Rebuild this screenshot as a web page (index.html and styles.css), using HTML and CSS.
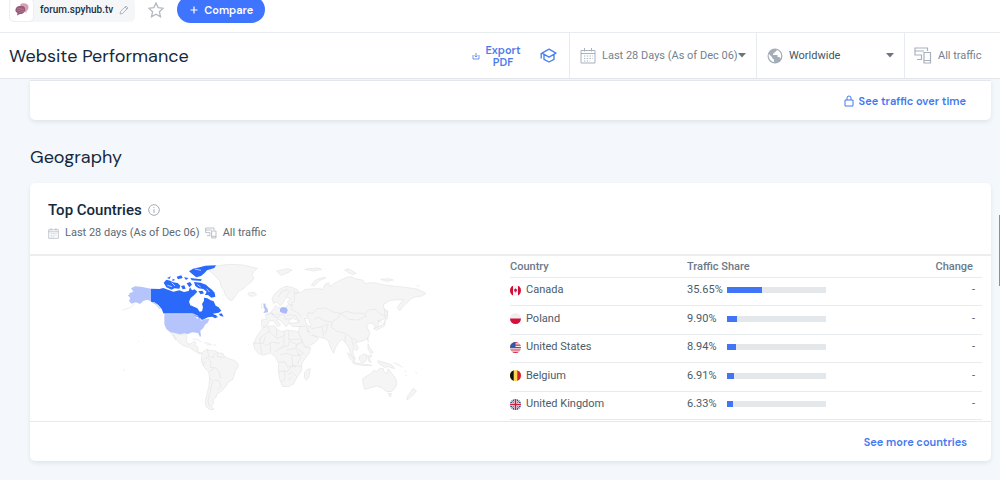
FILE: index.html
```html
<!DOCTYPE html>
<html lang="en">
<head>
<meta charset="utf-8">
<meta name="viewport" content="width=device-width, initial-scale=1">
<title>Website Performance</title>
<link rel="stylesheet" href="styles.css">
</head>
<body>
<svg class="defs" aria-hidden="true">
  <symbol id="calendar" viewBox="0 0 16 16"><path d="M1 2.500h14v12.500H1zM1 5.500h14M4.500 0v3.500M11.500 0v3.500" fill="none" stroke="currentColor"/><path d="M4 8h9M4 10.500h9M4 13h6" fill="none" stroke="currentColor" stroke-width="1.200" stroke-dasharray="1.300 1.500"/></symbol>
  <symbol id="devices" viewBox="0 0 18 17"><path d="M13.500 4V1H1v7h6.500v4.500H3M1 4h9M10 5.500h6.500v10.500H10zM10 13.500h6.500" fill="none" stroke="currentColor" stroke-width="1.200"/></symbol>
  <symbol id="caret" viewBox="0 0 8 5"><path d="M0 0h8L4 4.500z" fill="currentColor"/></symbol>
</svg>
<header class="topbar">
  <div class="site">
    <span class="site-icon"><svg width="14" height="13" viewBox="0 0 14 13"><path d="M5 1.500C8-1 14 0 13.500 4.500c0 2-1 3-2 3.500v2L9 8z" fill="#d3a3b2"/><path d="M1 5C3 2 9 2 10 5c1 4-2 6-5 6l-3 1.500.500-2.500C0 9 0 7 1 5z" fill="#95597a"/><path d="M2 6l5-1M2 8l7-2M4 9.500l5-1.500" stroke="#b97c91" stroke-width=".8"/></svg></span>
    <span class="site-name">forum.spyhub.tv</span>
    <button class="icon-button" aria-label="Edit website"><svg width="10" height="10" viewBox="0 0 10 10"><path d="M1 9l.6-2.600L7 1l2 2-5.400 5.400zM6 2l2 2" fill="none" stroke="#a9b0b8" stroke-width=".9"/></svg></button>
  </div>
  <button class="icon-button star" aria-label="Add to favorites"><svg width="16" height="16" viewBox="0 0 16 16"><path d="M8 .9l2.100 4.700 5.100.6-3.800 3.500 1.100 5.100L8 12.200l-4.500 2.600 1.100-5.100L.8 6.200l5.100-.6z" fill="none" stroke="#b2bac2" stroke-width="1.300"/></svg></button>
  <button class="compare"><svg width="8" height="8" viewBox="0 0 8 8"><path d="M4 .5v7M.5 4h7" stroke="#fff" stroke-width="1.200"/></svg>Compare</button>
</header>
<div class="toolbar">
  <h1>Website Performance</h1>
  <button class="export"><svg width="8" height="8" viewBox="0 0 8 8"><path d="M1 3v4h6V3M4 1v4M2.500 3.500L4 5l1.500-1.500" fill="none" stroke="currentColor" stroke-width=".8"/></svg><span>Export PDF</span></button>
  <button class="icon-button academy" aria-label="Academy"><svg width="18" height="15" viewBox="0 0 18 15"><path d="M9 1.200l7 4-7 4-7-4zM4 6.800v4.500l5 2.700 5-2.700V6.800M1.200 5v5.500" fill="none" stroke="#4b84f0" stroke-width="1.400" stroke-linejoin="round"/></svg></button>
  <div class="filter date"><svg class="filter-icon" width="16" height="16"><use href="#calendar"/></svg><select aria-label="Date range"><option>Last 28 Days (As of Dec 06)</option></select><svg class="caret" width="8" height="5"><use href="#caret"/></svg></div>
  <div class="filter country"><svg class="filter-icon" width="16" height="16" viewBox="0 0 16 16"><circle cx="8" cy="8" r="7.500" fill="#a4adb8"/><path d="M1.800 6l3.200 3v1l2 1.500v2.500C3.500 13.500 1 10 1.800 6zM9.500 1.700c.5 1.500-.5 1.800-2 2.300v1.500H6V7h4.500v2H12c1 0 1.300 1 1.300 2 1.700-2.500 1.300-7.500-3.800-9.300z" fill="#fff"/></svg><select aria-label="Country"><option>Worldwide</option></select><svg class="caret" width="8" height="5"><use href="#caret"/></svg></div>
  <div class="filter traffic"><svg class="filter-icon" width="18" height="17"><use href="#devices"/></svg><span>All traffic</span></div>
</div>
<main>
  <section class="card previous">
    <a class="more" href="#traffic"><svg width="10" height="12" viewBox="0 0 10 12"><path d="M1 5h8v6H1zM3 5V3a2 2 0 0 1 4 0v2" fill="none" stroke="currentColor"/></svg>See traffic over time</a>
  </section>
  <h2>Geography</h2>
  <section class="card">
    <div class="card-head">
      <h3>Top Countries <svg width="12" height="12" viewBox="0 0 12 12"><circle cx="6" cy="6" r="5.300" fill="none" stroke="#a5adb6"/><path d="M6 5.200V9M6 3v1.200" stroke="#a5adb6"/></svg></h3>
      <p class="meta"><svg width="11" height="11"><use href="#calendar"/></svg><span>Last 28 days (As of Dec 06)</span><svg width="12" height="12"><use href="#devices"/></svg><span>All traffic</span></p>
    </div>
    <div class="card-body">
      <div class="map">
        <svg width="330" height="164" viewBox="0 0 990 492" role="img" aria-label="World map of traffic share" stroke-linejoin="round">
          <g fill="#f5f5f5" stroke="#e4e4e4" stroke-width="2">
            <path d="M298 44L312 32 330 28 360 25 400 27 420 32 442 37 430 48 426 58 432 66 424 78 410 88 400 98 385 106 376 120 366 134 356 130 345 116 342 104 334 94 330 76 318 62z"/>
            <path d="M180 228L195 231 210 235 225 234 231 240 229 254 236 265 246 262 252 256 258 259 254 268 264 274 264 288 276 292 266 293 252 283 238 274 220 269 206 259 196 245 190 235 197 252 189 241z"/>
            <path d="M248 249l12 1 14 8M282 260l14 2 8 4-14 1M310 266l8 2" fill="none"/>
            <path d="M276 290L290 280 302 284 314 284 326 291 338 292 344 302 356 308 372 313 384 322 385 332 376 344 372 358 369 370 355 378 348 390 338 402 328 410 320 414 318 424 310 430 310 442 304 452 312 460 300 461 288 452 286 434 292 410 297 388 299 364 296 348 284 335 274 316z"/>
            <path d="M292 280l4 22 14 3 4-13M322 288v14l12 2M280 310l12-6 10 12v18l16 2 10 14 4 18M300 345l12-8M298 365l10 10-14 60 4 16M312 372l14 2 8 16-12 12M276 316l10 4-8 10M332 304l12-1" fill="none"/>
            <path d="M413 113l8-4 14 1 5 6-10 5-12-2zM84 255l3 2M40 342l5 1M415 265l2 3"/>
            <g transform="translate(420 0)">
              <path d="M34 192L50 190 46 176 60 171 72 158 78 148 84 155 108 154 116 144 112 138 122 128 108 124 100 140 90 150 82 138 70 142 66 128 76 112 92 98 108 91 126 94 142 101 146 108 134 112 154 109 166 100 200 98 218 100 226 84 236 80 240 92 250 84 272 72 290 64 304 62 318 69 338 72 345 82 372 80 396 86 428 90 448 92 480 96 504 100 528 112 516 120 498 122 484 128 476 136 462 148 449 164 442 156 450 142 462 132 440 131 418 134 400 146 402 158 414 166 410 180 398 192 386 194 384 212 376 216 370 202 358 202 350 206 352 216 360 230 356 244 340 254 324 258 315 260 325 274 320 284 310 276 308 290 316 310 304 300 298 278 288 262 276 250 264 262 256 276 251 292 243 278 236 256 226 248 210 244 192 240 180 228 170 224 182 238 196 240 206 248 192 262 168 274 156 254 144 226 150 212 128 211 118 202 108 212 98 200 86 190 80 192 92 206 84 212 70 194 58 194 52 208 36 214z"/>
              <path d="M38 216l20-6 17 0 6 11 16 7 12-6 31 4 8 9 10 27 7 13 17-1-4 16-17 23-6 12-1 20-14 20-9 18-16 9-17-1-8-18-5-28 1-22-10-22-15-10-22 7-13-5-12-14-4-15 10-22z"/>
              <path d="M164 348l10-8 7-2-5 28-8 6-5-8z"/>
              <path d="M80 45l18-4 16-3 12 4-12 8-22 8zM165 40l18-3 22-1 10 4-24 5zM184 88l10-14 18-8 16-1-18 8-17 17zM284 42l10-4 24 13-8 5-12-5zM392 70l24-2 14 4-20 4zM500 89l8 1"/>
              <path d="M403 158l9 10 1 18-7 8-2 15-12 7-12 6-10-4 18-8 12-6 6-12zM353 245l3 12-4-5z"/>
              <path d="M293 290l10 8 12 16-5 4-12-13zM308 318l18 4 40 6-24 1-29-5zM328 302l14-9 10 5-4 17-12 5-8-8zM354 300l12-2-7 10 4 12-8-6zM354 263l6 14 10 12-8 4-8-14zM384 314l18 5 22 7 10 12-18-6-12 2-20-14zM430 320l12 4 16 10M464 344l4 4M466 358l5 2M496 350l5 2"/>
              <path d="M338 368L350 360 362 354 370 344 382 346 388 338 400 338 402 348 412 352 414 338 422 348 430 358 438 370 440 384 434 398 424 407 408 406 396 395 380 390 362 395 344 400 340 386zM414 412l10 1-3 10zM489 397l10 8-10 12-18 15 0-8z"/>
              <path d="M34 145l6-3 4 9-9 6zM54 178l8-9M62 170l14 8 10-6M70 180l14 6 4-10 16 2 2 12 16-2M85 124l10-18 20-6M108 122l12-18M132 102l2 32-12 10 4 18 18 8 8 12M118 146l14 2M110 178l12-2 16 4 10 16M120 198l26 2M172 182L174 170 190 172 202 158 226 156 250 168 272 172M272 172L264 186 246 198 222 194 206 184 192 190M272 172L290 166 312 172 340 172 350 180 324 192 296 190zM344 174L356 162 378 160 390 174 410 180M382 194l14 6M246 198L244 214 262 226 288 232 302 244 324 256M148 212l20-2 10 18M172 206l14 12 30-6 20-8M216 212l6 30M234 208l-8 26M286 236v24M304 246l6 26" fill="none"/>
              <path d="M54 212l4 14-28 20v20M58 226l22 22 24-10-2-14M80 218v26M116 226v24h32M102 242v24l-12 12M12 262h28l6-20M30 266l6 26M44 270l22-12 24 4M60 262l2 26M74 288l18-12 24-8 2-18M120 256l20 10 16-8M110 282l26-4 8-18M92 296l16-4 30 8 20-6M86 318h20l6 14h26M86 346h28l12-18 30 4M104 344v28l-10 4M114 356l12-8 14 14M126 300l2 30M140 284l12 22-10 16M114 372l12-8M138 276l26 18" fill="none"/>
            </g>
          </g>
          <g fill="#fff" stroke="#e4e4e4" stroke-width="2"><path d="M536 194l12-7 20 8-10 6h-20zM584 188l12-2 2 12 6 10-6 4-10-12z"/></g>
          <g fill="#b5c5fc">
            <path d="M56 112l14-5-7-10 12-6 18 1 30 6v38l-10-5-12 3-11 10-12-5-14 4-7-8 4-9-8-8 8-4z"/>
            <path d="M74 144l-12 10-24 9" fill="none" stroke="#dfe5fa" stroke-width="2"/>
            <path d="M123 136l16 10 12 14" fill="none" stroke="#b5c5fc" stroke-width="3"/>
            <path d="M163 173H248L259 179 269 182 273 194 285 190 299 188 293 200 285 206 280 216 271 224 273 240 270 243 264 231 246 229 232 235 224 232 210 235 195 231 180 228 169 219 163 205z"/>
          </g>
          <g fill="#2b69fb">
            <path d="M123 98L148 99 160 96 176 102 190 107 208 103 222 108 236 105 240 94 246 103 254 100 262 107 252 118 242 126 237 137 241 148 252 152 262 157 269 167 276 166 279 154 276 144 282 134 282 125 292 127 302 133 311 136 317 149 326 154 334 164 326 170 308 173 322 180 306 182 294 184 276 192 270 186 258 180 248 174H161L155 159 145 147 133 139 123 137z"/>
            <path d="M161 80l8-9 12 3 8 5 14 2 8 8-3 9-15-1-8 4-16-7zM213 90l10-2 4 10-9 2zM230 82l10-4 6 8-8 8zM252 78L272 80 288 86 296 94 306 101 314 110 316 122 304 125 294 117 285 117 290 107 280 99 266 97 256 90zM265 106l12-2 5 8-10 3zM237 46l12-8 20-4 17-5 32-1-5 8-22 7-8 9-10 8-14 4-8-6zM241 66l18 2 16 2-2 5-28-2zM200 62l14-4 4 8-14 4zM171 66l12-5-5 8zM188 68l8 4-9 3zM222 64l14 2-8 6zM327 174l8-2 6 10-11-3zM304 180l10-3 10 6-9 4z"/>
          </g>
          <g fill="none" stroke="#fff" stroke-width="2"><path d="M185 80l10 10M172 88l14 4M255 39l18 4M262 86l10 7M290 98l8 10M160 173h88l17 8"/></g>
          <path d="M256 183l9 1-2 5z" fill="#fff"/>
          <path d="M510 158l8-5 12 2 3 8-4 10-10-1-9-5z" fill="#abbaf7"/>
          <path d="M460 145l6-3 1 9 6 8 1 10-14 2 5-8-3-8z" fill="#b8c3f8"/>
          <path d="M482 172l7 1-1 5z" fill="#cbd4fa"/>
        </svg>
      </div>
      <table>
        <thead><tr><th class="name">Country</th><th class="share">Traffic Share</th><th class="change">Change</th></tr></thead>
        <tbody>
          <tr><td><span class="cell"><svg class="flag" viewBox="0 0 11 11"><rect width="11" height="11" fill="#f5f3f4"/><path d="M0 0h3v11H0zM8 0h3v11H8zM5.500 3l.6 1.300 1.100.2-.7 2-.8.2v1h-.4v-1l-.8-.2-.7-2 1.100-.2z" fill="#cf1036"/></svg>Canada</span></td><td><span class="cell"><span class="value">35.65%</span><span class="bar"><i style="width:35.65%"></i></span></span></td><td class="change">-</td></tr>
          <tr><td><span class="cell"><svg class="flag" viewBox="0 0 11 11"><rect width="11" height="11" fill="#f0f0f0"/><path d="M0 5.500h11V11H0z" fill="#d5113b"/></svg>Poland</span></td><td><span class="cell"><span class="value">9.90%</span><span class="bar"><i style="width:9.9%"></i></span></span></td><td class="change">-</td></tr>
          <tr><td><span class="cell"><svg class="flag" viewBox="0 0 11 11"><rect width="11" height="11" fill="#f0f0f0"/><path d="M0 .7h11M0 3.200h11M0 5.700h11M0 8h11M0 10.300h11" stroke="#d22b49" stroke-width="1.200"/><path d="M0 0h5.500v5.500H0z" fill="#2a5ba8"/></svg>United States</span></td><td><span class="cell"><span class="value">8.94%</span><span class="bar"><i style="width:8.94%"></i></span></span></td><td class="change">-</td></tr>
          <tr><td><span class="cell"><svg class="flag" viewBox="0 0 11 11"><rect width="11" height="11" fill="#fbd750"/><path d="M0 0h3.700v11H0z" fill="#111"/><path d="M7.300 0H11v11H7.300z" fill="#d51a35"/></svg>Belgium</span></td><td><span class="cell"><span class="value">6.91%</span><span class="bar"><i style="width:6.91%"></i></span></span></td><td class="change">-</td></tr>
          <tr><td><span class="cell"><svg class="flag" viewBox="0 0 11 11"><rect width="11" height="11" fill="#294a92"/><path d="M0 0l11 11M11 0L0 11" stroke="#f0f0f0" stroke-width="1.800"/><path d="M0 0l11 11M11 0L0 11" stroke="#d3193c" stroke-width=".7"/><path d="M5.500 0v11M0 5.500h11" stroke="#f0f0f0" stroke-width="2.800"/><path d="M5.500 0v11M0 5.500h11" stroke="#d3193c" stroke-width="1.500"/></svg>United Kingdom</span></td><td><span class="cell"><span class="value">6.33%</span><span class="bar"><i style="width:6.33%"></i></span></span></td><td class="change">-</td></tr>
        </tbody>
      </table>
    </div>
    <footer class="card-foot"><a class="more" href="#countries">See more countries</a></footer>
  </section>
</main>
<div class="side-tab"></div>
</body>
</html>
```
FILE: styles.css
```css
* { box-sizing: border-box; }
body { margin: 0; background: #f4f8fc; color: #4a5b69; font: 11px/16px Roboto, sans-serif; overflow: hidden; min-height: 100vh; }
button { font: inherit; color: inherit; border: 0; background: none; padding: 0; cursor: pointer; }
svg { display: block; flex: none; }
h1, h2, h3, p { margin: 0; }
.defs { position: absolute; width: 0; height: 0; }
h1, h2 { font: 400 18px/24px "DM Sans", Inter, sans-serif; color: #14293c; }
.topbar { display: flex; align-items: center; height: 37px; margin-top: -4px; padding: 0 9px 9px; background: #fff; border-bottom: 1px solid #e8ebef; }
.site { display: flex; align-items: center; height: 24px; padding-right: 6px; background: #f5f6f7; border-radius: 5px; }
.site-icon { display: grid; place-items: center; width: 25px; height: 24px; background: #fff; border: 1px solid #eceef1; border-radius: 5px; }
.site-name { margin: 0 6px; color: #1b3145; font-size: 10px; font-weight: 500; }
.star { margin: 0 13px; }
.compare { display: flex; align-items: center; gap: 6px; height: 27px; padding: 0 12px 0 13px; border-radius: 14px; background: #3e74fe; color: #fff; font: 600 11px/16px "DM Sans", Inter, sans-serif; }
.toolbar { display: flex; align-items: center; height: 46px; padding-left: 9px; background: #fff; border-bottom: 1px solid #e3e7eb; }
.toolbar h1 { flex: 1; }
.export { display: flex; align-items: center; gap: 4px; color: #4b7bec; font: 600 11px/12px "DM Sans", Inter, sans-serif; }
.export span { width: 38px; }
.academy { margin: 0 11px 0 18px; }
.filter { display: flex; align-items: center; align-self: stretch; border-left: 1px solid #e8ebef; padding: 0 10px; color: #74818e; }
.filter-icon { margin-right: 6px; color: #a9b1bc; }
.filter select { flex: 1; min-width: 0; appearance: none; border: 0; padding: 0; background: none; color: inherit; font: inherit; }
.filter .caret { color: #6c757e; }
.date { width: 187px; }
.country { width: 148px; color: #435563; }
.traffic { width: 96px; padding-left: 9px; }
main { padding: 0 9px 0 30px; }
.card { background: #fff; border-radius: 5px; box-shadow: 0 2px 4px rgba(30, 60, 90, .1); }
.previous { display: flex; align-items: center; justify-content: flex-end; height: 40px; margin-top: 1px; padding-right: 25px; border-top: 1px solid #e3e7eb; border-radius: 0 0 5px 5px; }
.more { display: flex; align-items: center; gap: 5px; color: #4479f1; font: 600 11px/16px "DM Sans", Inter, sans-serif; text-decoration: none; }
h2 { margin: 25px 0 14px; }
.card-head { padding: 17px 18px 13px; border-bottom: 2px solid #ebedef; }
h3 { display: flex; align-items: center; gap: 6px; color: #14293c; font: 500 15px/20px Roboto, sans-serif; }
.meta { display: flex; align-items: center; margin-top: 5px; color: #5b6975; }
.meta svg { color: #a9b1bc; margin-right: 6px; }
.meta span { margin-right: 5px; }
.card-body { display: grid; grid-template-columns: minmax(0, 480fr) minmax(0, 472fr); padding-right: 9px; border-bottom: 1px solid #e6e9ed; }
.map { padding-left: 80px; }
table { width: 100%; border-collapse: separate; border-spacing: 0; table-layout: fixed; margin-bottom: 1px; }
th, td { padding: 0 0 3px; text-align: left; border-bottom: 1px solid #e8ebee; }
th { height: 22px; padding: 0; color: #6b7a89; font-weight: 500; font-size: 11px; }
td { height: 28px; }
tr:nth-child(even) td { height: 29px; }
.name { width: 177px; }
.change { text-align: right; padding-right: 9px; }
td.change { padding-right: 7px; }
th.change { width: 80px; }
.cell { display: flex; align-items: center; }
.flag { width: 11px; height: 11px; margin-right: 5px; border-radius: 50%; }
.value { width: 40px; }
.bar { width: 99px; height: 6px; background: #e5e8eb; }
.bar i { display: block; height: 100%; background: #4076f5; }
.card-foot { display: flex; justify-content: flex-end; padding: 12px 24px 11px; }
.side-tab { position: absolute; top: 215px; right: 0; width: 1px; height: 71px; background: #6f94c8; }
```
